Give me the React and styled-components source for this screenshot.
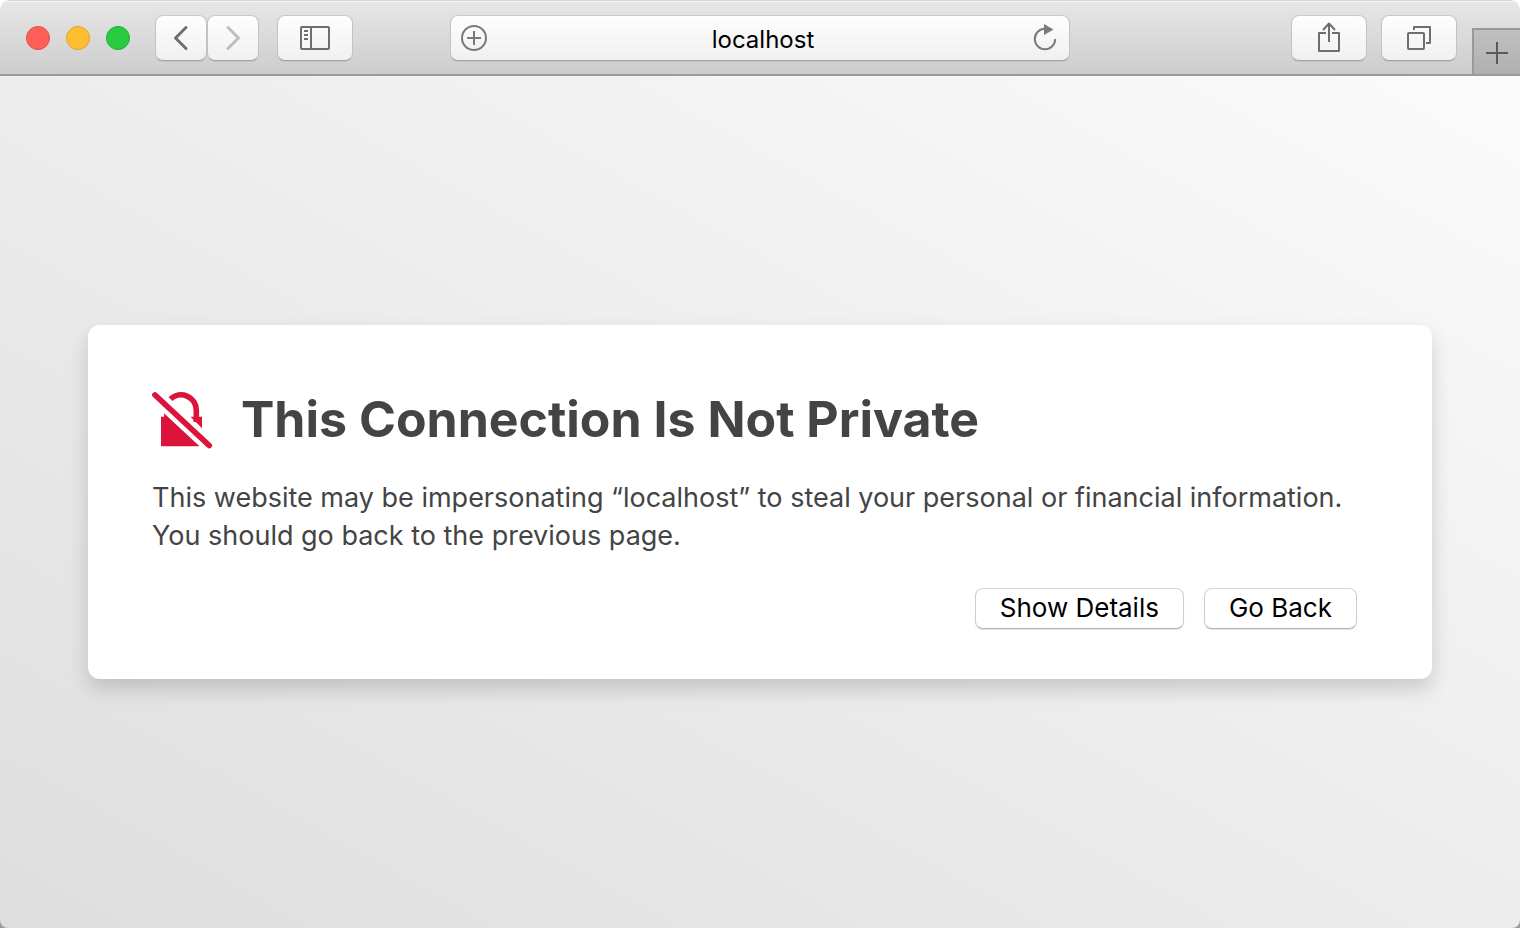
import React from "react";
import styled, { createGlobalStyle, css } from "styled-components";

const GlobalStyle = createGlobalStyle`
  *, *::before, *::after { box-sizing: border-box; }
  html, body, #root { height: 100%; }
  body {
    margin: 0;
    background: linear-gradient(#fff 50%, #9c9c9c 50%);
    font-family: Inter, "Liberation Sans", sans-serif;
    color: #444;
  }
  button, input { font-family: inherit; }
`;

const Window = styled.div`
  min-height: 100%;
  display: flex;
  flex-direction: column;
  border-radius: 10px 10px 8px 8px;
  overflow: hidden;
`;

const Toolbar = styled.header`
  display: grid;
  grid-template-columns: minmax(353px, 1fr) minmax(200px, 620px) minmax(229px, 1fr);
  height: 76px;
  padding-top: 2px;
  background: linear-gradient(#e7e7e7, #cdcdcd);
  border-bottom: 2px solid #999;
  border-radius: 10px 10px 0 0;
  box-shadow: inset 0 1px 0 #d4d4d4, inset 0 2px 0 #f3f3f3;
`;

const Group = styled.div`
  display: flex;
  align-items: center;
  gap: ${(p) => p.$gap || 0}px;
`;

const LeftSide = styled(Group)`
  padding-left: 26px;
`;

const RightSide = styled(Group)`
  justify-content: flex-end;
`;

const HistoryGroup = styled(Group)`
  margin: 0 18px 0 25px;
`;

const Light = styled.button`
  width: 24px;
  height: 24px;
  padding: 0;
  border-radius: 50%;
  border: 1px solid ${(p) => p.$edge};
  background: ${(p) => p.$fill};
`;

const raised = css`
  border: 1px solid;
  border-color: #c9c9c9 #c2c2c2 #a3a3a3;
  border-radius: 8px;
  background: linear-gradient(#fefefe, #f0f0f0);
  box-shadow: 0 1px 0 rgba(0, 0, 0, 0.06);
`;

const ToolButton = styled.button`
  ${raised}
  display: flex;
  align-items: center;
  justify-content: center;
  width: ${(p) => (p.$narrow ? 52 : 76)}px;
  height: 46px;
  padding: 0;
  color: ${(p) => (p.disabled ? "#bdbdbd" : "#6e6e6e")};
`;

const AddressBar = styled.form`
  ${raised}
  align-self: center;
  display: flex;
  align-items: center;
  height: 46px;
  padding: 0 10px;
  color: #7a7a7a;
`;

const BarButton = styled.button`
  display: flex;
  padding: 0;
  border: 0;
  background: none;
  color: inherit;
`;

const AddressInput = styled.input`
  flex: 1;
  min-width: 0;
  padding: 4px 0 0 8px;
  border: 0;
  outline: 0;
  background: none;
  color: #000;
  font-size: 24px;
  line-height: 30px;
  text-align: center;
`;

const NewTab = styled.button`
  align-self: flex-end;
  display: flex;
  align-items: center;
  justify-content: center;
  width: 48px;
  height: 46px;
  padding: 2px 0 0;
  border: solid #999;
  border-width: 2px 0 0 2px;
  background: linear-gradient(#c0c0c0, #b0b0b0);
  color: #5a5a5a;
`;

const Page = styled.main`
  flex: 1;
  display: flex;
  align-items: center;
  padding: 40px 88px;
  background: linear-gradient(to top right, #dedede, #fbfbfb);
`;

const Card = styled.section`
  flex: 1;
  padding: 65px 75px 50px 64px;
  border-radius: 12px;
  background: #fff;
  box-shadow: 0 10px 20px rgba(0, 0, 0, 0.16);
`;

const Heading = styled.div`
  display: flex;
  align-items: center;
  gap: 28px;
`;

const Title = styled.h1`
  margin: 0;
  padding-bottom: 2px;
  font-size: 50px;
  line-height: 58px;
  font-weight: 700;
`;

const Message = styled.p`
  margin: 29px 0 33px;
  font-size: 27px;
  line-height: 38px;
`;

const Actions = styled.div`
  display: flex;
  justify-content: flex-end;
  gap: 20px;
`;

const ActionButton = styled.button`
  height: 41px;
  padding: 0 24px 2px;
  border: 1px solid;
  border-color: #d6d6d6 #cdcdcd #b4b4b4;
  border-radius: 8px;
  background: #fff;
  box-shadow: 0 1px 1px rgba(0, 0, 0, 0.12);
  color: #000;
  font-size: 26px;
  line-height: 36px;
`;

const Icon = ({ w, h, sw = 2, children }) => (
  <svg
    width={w}
    height={h}
    viewBox={`0 0 ${w} ${h}`}
    fill="none"
    stroke="currentColor"
    strokeWidth={sw}
    strokeLinejoin="round"
    aria-hidden="true"
  >
    {children}
  </svg>
);

const BrokenLock = () => (
  <svg width="61" height="60" viewBox="0 0 61 60" fill="#dc143c" aria-hidden="true">
    <path d="M3 5 57.200 55.500" stroke="#dc143c" strokeWidth="5.800" strokeLinecap="round" />
    <path d="M18.500 9A15.300 15.300 0 0 1 44.300 20V32" fill="none" stroke="#dc143c" strokeWidth="5.600" />
    <path d="M38.500 26.700H50v11.600z" />
    <path d="M9 26.700h3v-3.500L47.500 56.300H9z" />
  </svg>
);

export default function App() {
  return (
    <>
      <GlobalStyle />
      <Window>
        <Toolbar>
          <LeftSide>
            <Group $gap={16}>
              <Light aria-label="Close window" $fill="#ff5f57" $edge="#e24b41" />
              <Light aria-label="Minimize window" $fill="#ffbe2f" $edge="#e1a12c" />
              <Light aria-label="Zoom window" $fill="#29cb41" $edge="#1dad2b" />
            </Group>
            <HistoryGroup as="nav">
              <ToolButton $narrow aria-label="Back">
                <Icon w={16} h={26} sw={3}>
                  <path d="M13 2.500 2.500 13 13 23.500" strokeLinecap="round" />
                </Icon>
              </ToolButton>
              <ToolButton $narrow disabled aria-label="Forward">
                <Icon w={16} h={26} sw={3}>
                  <path d="M3 2.500 13.500 13 3 23.500" strokeLinecap="round" />
                </Icon>
              </ToolButton>
            </HistoryGroup>
            <ToolButton aria-label="Show sidebar">
              <Icon w={30} h={24}>
                <rect x="1" y="1" width="28" height="22" rx="1" />
                <path d="M11 1v22M4 5h4M4 9h4M4 13h4" />
              </Icon>
            </ToolButton>
          </LeftSide>
          <AddressBar onSubmit={(e) => e.preventDefault()}>
            <BarButton type="button" aria-label="Add to reading list">
              <Icon w={26} h={26}>
                <circle cx="13" cy="13" r="12" />
                <path d="M13 6v14M6 13h14" />
              </Icon>
            </BarButton>
            <AddressInput aria-label="Address" defaultValue="localhost" />
            <BarButton type="button" aria-label="Reload">
              <Icon w={28} h={28}>
                <path d="M14 4.800A10.200 10.200 0 1 0 24.200 15" />
                <path d="M13 0v11l9.500-5.500z" fill="currentColor" stroke="none" />
              </Icon>
            </BarButton>
          </AddressBar>
          <RightSide $gap={15}>
            <Group $gap={14}>
              <ToolButton aria-label="Share">
                <Icon w={24} h={32}>
                  <path d="M9 11H2v18h20V11h-7M12 20V2M6 8l6-6.500L18 8" />
                </Icon>
              </ToolButton>
              <ToolButton aria-label="Show all tabs">
                <Icon w={26} h={26}>
                  <rect x="2" y="8" width="16" height="16" rx="1" />
                  <path d="M8 5V2h16v16h-4" />
                </Icon>
              </ToolButton>
            </Group>
            <NewTab aria-label="New tab">
              <Icon w={22} h={22}>
                <path d="M11 0v22M0 11h22" />
              </Icon>
            </NewTab>
          </RightSide>
        </Toolbar>
        <Page>
          <Card>
            <Heading>
              <BrokenLock />
              <Title>This Connection Is Not Private</Title>
            </Heading>
            <Message>
              This website may be impersonating “localhost” to steal your personal or financial information.
              <br />
              You should go back to the previous page.
            </Message>
            <Actions>
              <ActionButton>Show Details</ActionButton>
              <ActionButton>Go Back</ActionButton>
            </Actions>
          </Card>
        </Page>
      </Window>
    </>
  );
}
